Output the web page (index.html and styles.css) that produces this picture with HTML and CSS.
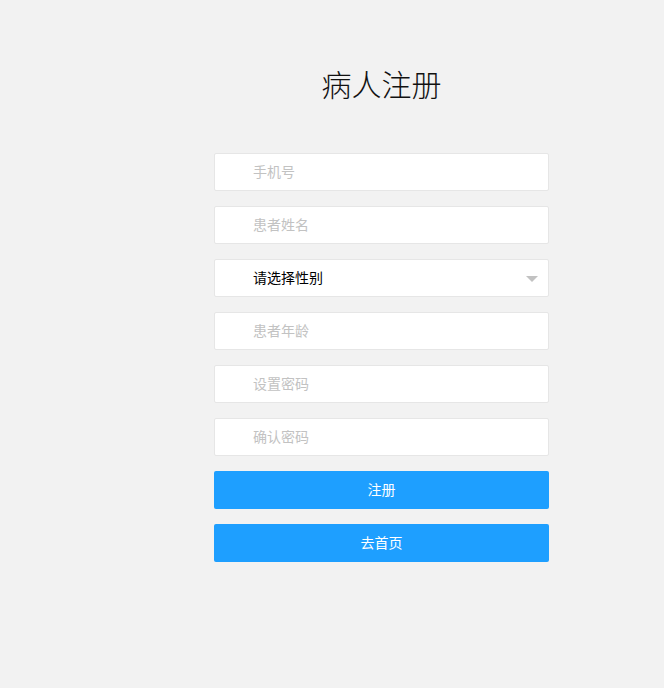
FILE: index.html
```
<!DOCTYPE html>
<html lang="zh">
<head>
<meta charset="utf-8">
<title>病人注册</title>
<link rel="stylesheet" href="styles.css">
</head>
<body>
<div class="page">
  <form class="reg">
    <h1 class="title">病人注册</h1>
    <input class="field" type="text" placeholder="手机号">
    <input class="field" type="text" placeholder="患者姓名">
    <div class="field select">
      <span class="select-text">请选择性别</span>
      <span class="caret"></span>
    </div>
    <input class="field" type="text" placeholder="患者年龄">
    <input class="field" type="password" placeholder="设置密码">
    <input class="field" type="password" placeholder="确认密码">
    <button class="btn" type="button">注册</button>
    <button class="btn" type="button">去首页</button>
  </form>
</div>
</body>
</html>
```
FILE: styles.css
```
html, body {
  margin: 0;
  padding: 0;
  background: #f2f2f2;
  font-family: "Noto Sans CJK SC", "Noto Sans", sans-serif;
  font-size: 14px;
  color: #000;
}
.page {
  padding-top: 63px;
  padding-left: 214px;
}
.reg {
  width: 335px;
  display: flex;
  flex-direction: column;
  gap: 15px;
}
.title {
  margin: 0 0 35px 0;
  font-size: 30px;
  line-height: 40px;
  font-weight: 300;
  text-align: center;
  color: #111;
}
.field {
  box-sizing: border-box;
  height: 38px;
  width: 100%;
  margin: 0;
  padding: 0 40px 2px 38px;
  border: 1px solid #e6e6e6;
  border-radius: 2px;
  background: #fff;
  font-family: inherit;
  font-size: 14px;
  color: #000;
  outline: none;
}
.field::placeholder {
  color: #c2c2c2;
}
.select {
  display: flex;
  align-items: center;
  justify-content: space-between;
  padding-right: 10px;
}
.caret {
  width: 0;
  height: 0;
  border-left: 6px solid transparent;
  border-right: 6px solid transparent;
  border-top: 6px solid #c2c2c2;
  margin-top: 3px;
}
.btn {
  box-sizing: border-box;
  height: 38px;
  width: 100%;
  border: none;
  border-radius: 2px;
  background: #1e9fff;
  color: #fff;
  font-family: inherit;
  font-size: 14px;
  cursor: pointer;
  padding: 0 0 2px 0;
}
```
